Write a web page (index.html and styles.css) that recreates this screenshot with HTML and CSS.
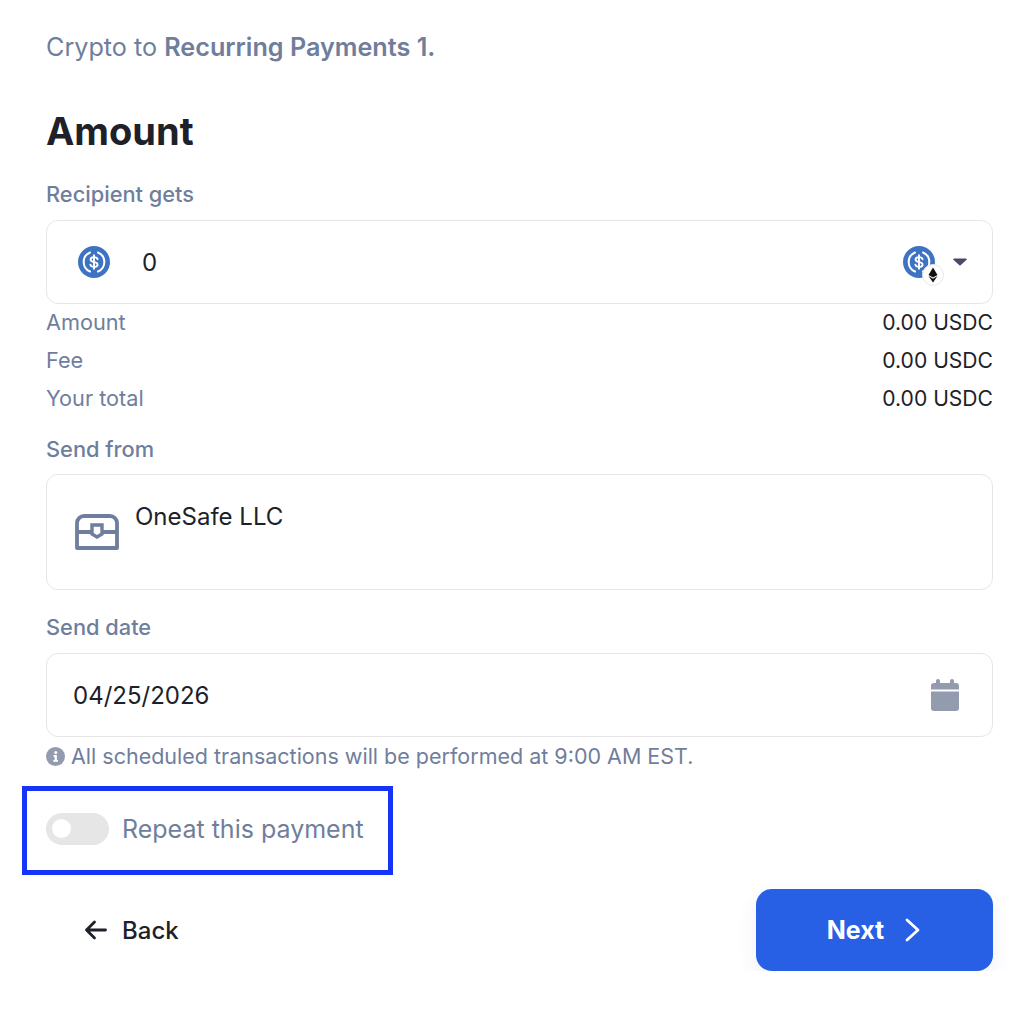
FILE: index.html
```html
<!DOCTYPE html>
<html lang="en">
<head>
  <meta charset="UTF-8">
  <meta name="viewport" content="width=device-width, initial-scale=1.0">
  <title>Amount</title>
  <link rel="stylesheet" href="styles.css">
</head>
<body>
  <p class="intro">Crypto to <strong>Recurring Payments 1.</strong></p>
  <h1>Amount</h1>

  <label class="field-label label-recipient">Recipient gets</label>
  <div class="box box-amount">
    <svg class="coin" width="32" height="32" viewBox="0 0 32 32">
      <circle cx="16" cy="16" r="16" fill="#3e73c4"/>
      <path d="M12 6.500a10.300 10.300 0 0 0 0 19M20 6.500a10.300 10.300 0 0 1 0 19" fill="none" stroke="#fff" stroke-width="2" stroke-linecap="round"/>
      <path d="M19.600 13.200c-.4-1.400-1.800-2.100-3.600-2.100-2 0-3.400 1-3.400 2.500 0 3.500 7 1.500 7 4.800 0 1.500-1.500 2.500-3.600 2.500-2 0-3.300-.8-3.600-2.300M16 9.200v13.600" fill="none" stroke="#fff" stroke-width="1.900" stroke-linecap="round"/>
    </svg>
    <span class="amount-value">0</span>
    <div class="token-select">
      <div class="token">
        <svg class="coin" width="32" height="32" viewBox="0 0 32 32">
          <circle cx="16" cy="16" r="16" fill="#3e73c4"/>
          <path d="M12 6.500a10.300 10.300 0 0 0 0 19M20 6.500a10.300 10.300 0 0 1 0 19" fill="none" stroke="#fff" stroke-width="2" stroke-linecap="round"/>
          <path d="M19.600 13.200c-.4-1.400-1.800-2.100-3.600-2.100-2 0-3.400 1-3.400 2.500 0 3.500 7 1.500 7 4.800 0 1.500-1.500 2.500-3.600 2.500-2 0-3.300-.8-3.600-2.300M16 9.200v13.600" fill="none" stroke="#fff" stroke-width="1.900" stroke-linecap="round"/>
        </svg>
        <svg class="eth" width="22" height="22" viewBox="0 0 22 22">
          <circle cx="11" cy="11" r="10.500" fill="#fff" stroke="#e8e8e8"/>
          <path d="M11 3.500 6.500 11 11 13.600 15.500 11z" fill="#111"/>
          <path d="M6.500 12 11 18.500 15.500 12 11 14.700z" fill="#111"/>
        </svg>
      </div>
      <svg class="caret" width="14" height="8" viewBox="0 0 14 8"><path d="M1 .5h12a.8.8 0 0 1 .6 1.300L7.600 7.200a.8.8 0 0 1-1.200 0L.4 1.800A.8.8 0 0 1 1 .5z" fill="#4a4a68"/></svg>
    </div>
  </div>

  <div class="summary">
    <div class="summary-row"><span>Amount</span><span class="summary-value">0.00 USDC</span></div>
    <div class="summary-row"><span>Fee</span><span class="summary-value">0.00 USDC</span></div>
    <div class="summary-row"><span>Your total</span><span class="summary-value">0.00 USDC</span></div>
  </div>

  <label class="field-label label-from">Send from</label>
  <div class="box box-from">
    <svg width="44" height="36" viewBox="0 0 44 36" fill="none" stroke="#6f7e9c" stroke-width="3.800">
      <path d="M2 34V9a7 7 0 0 1 7-7h26a7 7 0 0 1 7 7v25z" stroke-linejoin="round"/>
      <path d="M2 18h14M28 18h14"/>
      <path d="M17 11h10v9l-5 3-5-3z" stroke-width="3.400"/>
    </svg>
    <span class="from-name">OneSafe LLC</span>
  </div>

  <label class="field-label label-date">Send date</label>
  <div class="box box-date">
    <span class="date-value">04/25/2026</span>
    <svg width="28" height="32" viewBox="0 0 28 32" fill="#939bae">
      <path d="M7 0a2 2 0 0 1 2 2v2h10V2a2 2 0 0 1 4 0v2h2a3 3 0 0 1 3 3v3.500H0V7a3 3 0 0 1 3-3h2V2a2 2 0 0 1 2-2z"/>
      <path d="M0 12.500h28V29a3 3 0 0 1-3 3H3a3 3 0 0 1-3-3z"/>
    </svg>
  </div>

  <p class="note">
    <svg width="19" height="19" viewBox="0 0 19 19">
      <circle cx="9.500" cy="9.500" r="9.500" fill="#939bae"/>
      <circle cx="9.800" cy="5.400" r="1.500" fill="#fff"/>
      <path d="M7.500 8h3.400v5h1.100v1.700H7.300V13h1.300V9.700H7.500z" fill="#fff"/>
    </svg>
    All scheduled transactions will be performed at 9:00 AM EST.
  </p>

  <div class="repeat">
    <span class="toggle"><span class="toggle-knob"></span></span>
    <span>Repeat this payment</span>
  </div>

  <div class="actions">
    <button class="btn-back">
      <svg width="24" height="20" viewBox="0 0 24 20" fill="none" stroke="#1d2129" stroke-width="2.800" stroke-linecap="round" stroke-linejoin="round"><path d="M21.500 10H2.500M10.500 2 2.500 10l8 8"/></svg>
      Back
    </button>
    <button class="btn-next">
      Next
      <svg width="16" height="24" viewBox="0 0 16 24" fill="none" stroke="#fff" stroke-width="2.800" stroke-linecap="round" stroke-linejoin="round"><path d="M3 2 14 12 3 22"/></svg>
    </button>
  </div>
</body>
</html>
```

FILE: styles.css
```css
body {
  font-family: "Inter", "Noto Sans", sans-serif;
  margin: 0;
  padding: 0 37px 0 46px;
  background-color: #fff;
  color: #1d2129;
  font-size: 22px;
}
.intro {
  margin: 0;
  padding-top: 33px;
  line-height: 28px;
  color: #6f7e9c;
  font-size: 25.200px;
}
.intro strong {
  font-weight: 600;
}
h1 {
  margin: 48px 0 0;
  font-size: 38px;
  line-height: 44px;
  font-weight: 700;
}
.field-label {
  display: block;
  color: #6f7e9c;
  font-size: 21.800px;
  font-weight: 500;
  line-height: 26px;
}
.label-recipient {
  margin-top: 28px;
  margin-bottom: 13px;
}
.label-from {
  margin-top: 19px;
  margin-bottom: 12px;
}
.label-date {
  margin-top: 24px;
  margin-bottom: 13px;
}
.box {
  box-sizing: border-box;
  border: 1px solid #e6e6e9;
  border-radius: 12px;
  display: flex;
}
.box-amount {
  height: 84px;
  align-items: center;
  padding: 0 25px 0 31px;
}
.amount-value {
  margin-left: 32px;
  font-size: 24px;
}
.token-select {
  margin-left: auto;
  display: flex;
  align-items: center;
  gap: 18px;
}
.token {
  position: relative;
  width: 32px;
  height: 32px;
}
.coin {
  display: block;
}
.eth {
  position: absolute;
  left: 19px;
  top: 18px;
}
.caret {
  display: block;
}
.summary {
  margin: -1px 0 1px;
}
.summary-row {
  height: 38px;
  display: flex;
  justify-content: space-between;
  align-items: baseline;
  line-height: 38px;
  color: #6f7e9c;
  font-size: 21.700px;
}
.summary-value {
  color: #1d2129;
  font-size: 21.100px;
}
.box-from {
  height: 116px;
  padding: 27px 0 0 28px;
  gap: 16px;
  align-items: flex-start;
}
.box-from svg {
  margin-top: 12px;
}
.from-name {
  font-size: 24px;
  line-height: 30px;
}
.box-date {
  height: 84px;
  align-items: center;
  justify-content: space-between;
  padding: 0 33px 0 26px;
  font-size: 24px;
}
.date-value {
  padding-top: 1px;
}
.note {
  margin: 6px 0 0;
  display: flex;
  align-items: center;
  gap: 6px;
  line-height: 26px;
  color: #6f7e9c;
  font-size: 21.500px;
}
.repeat {
  box-sizing: border-box;
  width: 371px;
  height: 89px;
  margin: 17px 0 0 -24px;
  border: 5px solid #1534f5;
  padding: 0 0 4px 19px;
  display: flex;
  align-items: center;
  gap: 13px;
  color: #6f7e9c;
  font-size: 25px;
}
.toggle {
  box-sizing: border-box;
  width: 63px;
  height: 32px;
  border-radius: 16px;
  background: #e6e6e6;
  padding: 6px;
}
.toggle-knob {
  display: block;
  width: 19px;
  height: 19px;
  border-radius: 50%;
  background: #fff;
}
.actions {
  margin-top: 14px;
  display: flex;
  justify-content: space-between;
  align-items: center;
}
button {
  font-family: inherit;
  border: none;
  cursor: pointer;
  display: flex;
  align-items: center;
  font-size: 24px;
}
.btn-back {
  background: none;
  color: #1d2129;
  font-weight: 500;
  padding: 0 0 0 38px;
  gap: 14px;
}
.btn-next {
  width: 237px;
  height: 82px;
  padding: 0 2px 0 0;
  justify-content: center;
  gap: 20px;
  background-color: #2760e5;
  color: #fff;
  font-size: 25px;
  font-weight: 700;
  border-radius: 16px;
  box-shadow: 0 8px 20px rgba(39, 60, 160, 0.08);
}
```
